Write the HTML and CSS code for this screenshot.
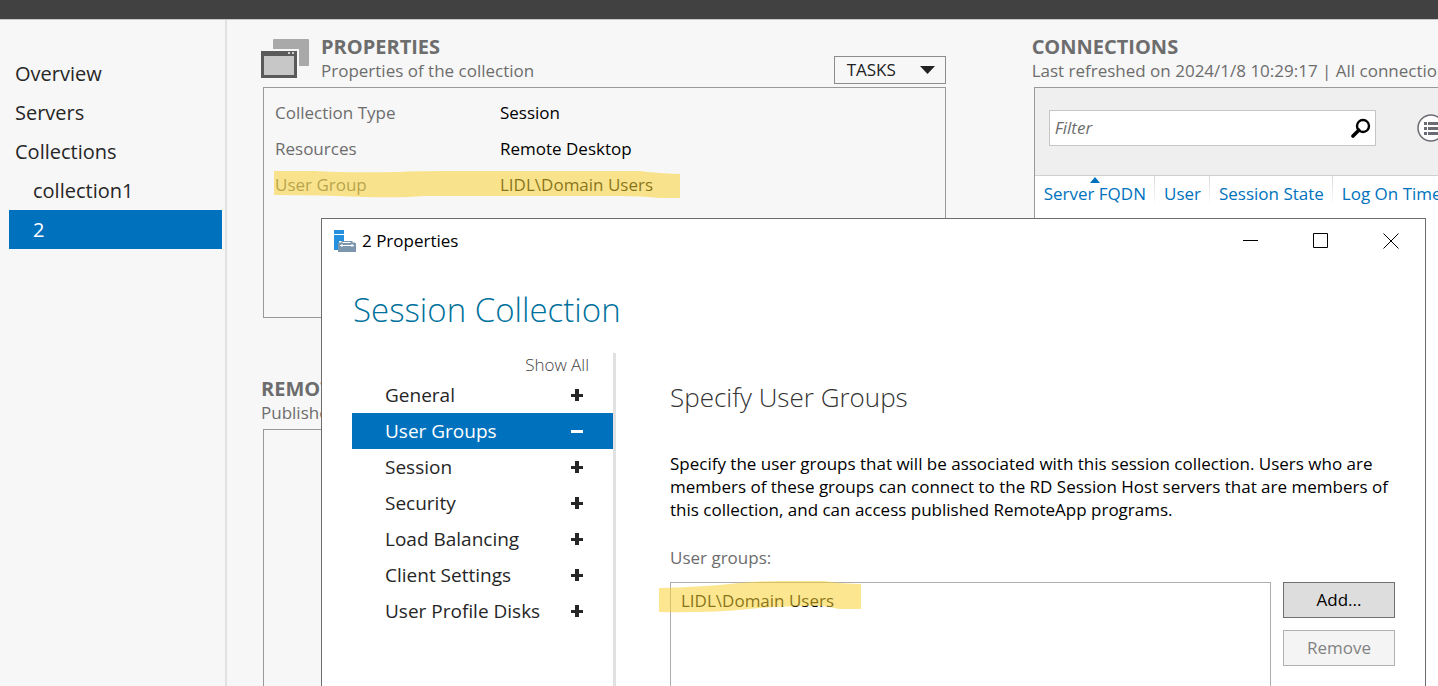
FILE: index.html
```
<!DOCTYPE html>
<html lang="en">
<head>
  <meta charset="UTF-8">
  <title>Session Collection</title>
  <link rel="stylesheet" href="styles.css">
</head>
<body>

<header class="topbar"></header>

<div class="layout">
  <nav class="sidebar">
    <a href="#">Overview</a>
    <a href="#">Servers</a>
    <a href="#">Collections</a>
    <a href="#" class="sub">collection1</a>
    <a href="#" class="sub active">2</a>
  </nav>

  <main class="content">
    <div class="column">
      <section class="panel">
        <div class="panel-head">
          <svg class="panel-icon" width="49" height="41" viewBox="0 0 49 41">
            <rect x="12" y="1" width="36" height="27" rx="1" fill="#a9a9a9"/>
            <rect x="-1" y="11" width="39" height="30" fill="#f7f7f7"/>
            <rect x="0" y="13" width="36" height="27" fill="#5a5a5a"/>
            <rect x="3" y="18" width="30" height="19" fill="#c7c7c7"/>
            <rect x="27" y="14" width="2" height="2" fill="#d0d0d0"/>
            <rect x="31" y="14" width="2" height="2" fill="#d0d0d0"/>
          </svg>
          <div class="panel-title">
            <h2>PROPERTIES</h2>
            <p>Properties of the collection</p>
          </div>
          <button class="tasks">TASKS
            <svg width="15" height="8" viewBox="0 0 15 8"><path d="M0 0h15L7.500 8z" fill="#222"/></svg>
          </button>
        </div>
        <div class="panel-body">
          <table class="props">
            <tr><th>Collection Type</th><td>Session</td></tr>
            <tr><th>Resources</th><td>Remote Desktop</td></tr>
            <tr><th>User Group</th><td>LIDL\Domain Users</td></tr>
          </table>
          <svg class="marker marker-props" width="406" height="30" viewBox="0 0 406 30">
            <path d="M0 1 L40 1 Q70 3 125 2 Q145 1 170 1 L366 1 Q380 3 406 4 L406 28 L386 28 Q366 26 346 26 L150 26 Q130 28 90 27 Q50 25 0 25 Z"/>
          </svg>
        </div>
      </section>

      <section class="panel apps">
        <div class="panel-head">
          <div class="panel-title">
            <h2>REMOTEAPP PROGRAMS</h2>
            <p>Published RemoteApp programs</p>
          </div>
        </div>
        <div class="panel-body"></div>
      </section>
    </div>

    <div class="column">
      <section class="panel connections">
        <div class="panel-head">
          <div class="panel-title">
            <h2>CONNECTIONS</h2>
            <p>Last refreshed on 2024/1/8 10:29:17 | All connections</p>
          </div>
        </div>
        <div class="panel-body">
          <div class="toolbar">
            <div class="filter">
              <input type="text" placeholder="Filter" aria-label="Filter">
              <svg width="20" height="20" viewBox="0 0 20 20" fill="none" stroke="#000">
                <circle cx="12" cy="8" r="6" stroke-width="2.400"/>
                <path d="M7.800 12.200L2 18" stroke-width="3.600" stroke-linecap="round"/>
              </svg>
            </div>
            <button class="list-btn" aria-label="List options">
              <svg width="28" height="28" viewBox="0 0 28 28">
                <circle cx="14" cy="14" r="13" fill="#fff" stroke="#6b6b73" stroke-width="1.500"/>
                <path d="M7 8h3v3H7zM11 8h10v3H11zM7 13h3v3H7zM11 13h10v3H11zM7 18h3v3H7zM11 18h10v3H11z" fill="#6b6b73"/>
              </svg>
            </button>
          </div>
          <table class="grid">
            <thead>
              <tr><th class="sorted">Server FQDN</th><th>User</th><th>Session State</th><th>Log On Time</th></tr>
            </thead>
          </table>
        </div>
      </section>
    </div>
  </main>
</div>

<div class="dialog" role="dialog" aria-labelledby="dialog-title">
  <div class="titlebar">
    <svg width="22" height="22" viewBox="0 0 22 22">
      <path d="M0 0h10v4H0zM0 5h10v6H5v9H0z" fill="#2590dd"/>
      <path d="M4 14q0-1.500 1.500-1.500h2V11h11v1.500h2q1.500 0 1.500 1.500v8H4z" fill="#7c97ad"/>
      <path d="M8.500 12.500h8M6 15.500h14M8 14v3M18 14v3" stroke="#fff" fill="none"/>
    </svg>
    <span id="dialog-title">2 Properties</span>
    <div class="window-buttons">
      <button aria-label="Minimize"><svg width="16" height="16" viewBox="0 0 16 16"><path d="M0 7.500h15"/></svg></button>
      <button aria-label="Maximize"><svg width="16" height="16" viewBox="0 0 16 16"><path d="M.5 .5h14v14H.5z"/></svg></button>
      <button aria-label="Close"><svg width="16" height="16" viewBox="0 0 16 16"><path d="M.5 .5l15 15M15.500 .5l-15 15"/></svg></button>
    </div>
  </div>

  <h1>Session Collection</h1>

  <div class="dialog-body">
    <nav class="steps">
      <a href="#" class="show-all">Show All</a>
      <a href="#">General<i class="plus"></i></a>
      <a href="#" class="active">User Groups<i class="minus"></i></a>
      <a href="#">Session<i class="plus"></i></a>
      <a href="#">Security<i class="plus"></i></a>
      <a href="#">Load Balancing<i class="plus"></i></a>
      <a href="#">Client Settings<i class="plus"></i></a>
      <a href="#">User Profile Disks<i class="plus"></i></a>
    </nav>

    <div class="page">
      <h2>Specify User Groups</h2>
      <p class="intro">Specify the user groups that will be associated with this session collection. Users who are members of these groups can connect to the RD Session Host servers that are members of this collection, and can access published RemoteApp programs.</p>
      <div class="label" id="groups-label">User groups:</div>
      <div class="groups">
        <ul class="group-list" aria-labelledby="groups-label">
          <li>LIDL\Domain Users</li>
        </ul>
        <div class="group-buttons">
          <button>Add...</button>
          <button disabled>Remove</button>
        </div>
        <svg class="marker marker-groups" width="202" height="34" viewBox="0 0 202 34">
          <path d="M0 8 Q40 7 70 4 Q100 1 120 1 L165 1 Q185 4 202 4 L202 29 L180 29 Q165 25 150 26 Q120 26 90 29 Q50 33 0 32 Z"/>
        </svg>
      </div>
    </div>
  </div>
</div>

</body>
</html>
```

FILE: styles.css
```
* { box-sizing: border-box; }
body { margin: 0; height: 100vh; display: flex; flex-direction: column; position: relative; overflow: hidden; background: #f7f7f7; font-family: "Segoe UI", "Open Sans", "Noto Sans", sans-serif; font-size: 17px; line-height: 24px; color: #000; }
h1, h2, p, ul { margin: 0; padding: 0; font-weight: normal; }
a { color: inherit; text-decoration: none; }
button, input { font: inherit; color: inherit; }
button { padding: 0; cursor: pointer; }

.topbar { flex: none; height: 20px; background: #414141; border-bottom: 1px solid #c8c8c8; }
.layout { flex: 1; display: flex; min-height: 0; }

.sidebar { flex: none; width: 227px; padding: 34px 3px 0 9px; border-right: 2px solid #e1e1e1; font-size: 20px; color: #262626; }
.sidebar a { display: block; height: 39px; line-height: 40px; padding-left: 6px; }
.sidebar .sub { padding-left: 24px; }
.sidebar .active { background: #0072bd; color: #fff; }

.content { flex: 1; min-width: 0; display: grid; grid-template-columns: minmax(0, 684fr) minmax(0, 406fr); gap: 86px; padding: 15px 0 0 34px; }
.column { display: flex; flex-direction: column; min-width: 0; }
.panel-head { flex: none; display: flex; align-items: flex-end; height: 52px; color: #6d6d6d; white-space: nowrap; }
.panel-icon { flex: none; margin: 0 11px 8px 0; }
.panel-title { flex: 1; min-width: 0; }
.panel-title h2 { font-size: 20px; font-weight: bold; }
.panel-title p { padding-bottom: 4px; overflow: hidden; }
.panel-body { position: relative; height: 231px; margin-left: 2px; border: 1px solid #999; }
.tasks { display: flex; align-items: center; justify-content: space-between; width: 112px; height: 28px; margin-bottom: 3px; padding: 0 10px 0 12px; border: 1px solid #8c8c8c; background: #f7f7f7; color: #222; }
.apps { flex: 1; display: flex; flex-direction: column; padding-top: 59px; }
.apps .panel-body { flex: 1; border-bottom: 0; }

.props { border-collapse: collapse; margin: 7px 0 0 11px; }
.props th, .props td { height: 36px; padding: 0; text-align: left; font-weight: normal; }
.props th { width: 225px; color: #6d6d6d; }

.marker { position: absolute; fill: #fad232; fill-opacity: 0.540; }
.marker-props { left: 10px; top: 82px; }
.marker-groups { left: -11px; top: -2px; }

.connections { flex: 1; display: flex; flex-direction: column; }
.connections .panel-body { flex: 1; border-right: 0; border-bottom: 0; background: #fff; }
.toolbar { display: flex; align-items: center; height: 88px; padding: 0 0 8px 14px; background: #efefef; border-bottom: 1px solid #d0d0d0; overflow: hidden; }
.filter { flex: none; display: flex; align-items: center; width: 327px; height: 36px; padding: 0 4px 0 5px; border: 1px solid #c6c6c6; background: #fff; }
.filter input { flex: 1; min-width: 0; border: 0; padding: 0; background: none; font-style: italic; outline: none; }
.filter input::placeholder { color: #6d6d6d; opacity: 1; }
.list-btn { flex: none; display: flex; margin-left: 41px; border: 0; background: none; }

.grid { border-collapse: collapse; white-space: nowrap; color: #0072bd; }
.grid th { position: relative; height: 36px; padding: 0 9px; font-weight: normal; background: linear-gradient(#d8d8d8, #fff) right top / 1px 30px no-repeat; }
.grid .sorted::before { content: ""; position: absolute; left: 50%; top: 1px; margin-left: -5px; border: 5px solid transparent; border-top: 0; border-bottom: 6px solid #0072bd; }

.dialog { position: absolute; left: 321px; right: 12px; top: 218px; bottom: 0; display: flex; flex-direction: column; border: 1px solid #6d6d6d; border-bottom: 0; background: #fff; overflow: hidden; }
.titlebar { display: flex; align-items: center; gap: 6px; height: 44px; padding: 0 26px 0 12px; }
.window-buttons { display: flex; gap: 54px; margin-left: auto; }
.window-buttons button { display: flex; border: 0; background: none; }
.window-buttons svg { fill: none; stroke: #000; }
.dialog h1 { padding-left: 31px; font-size: 33px; line-height: 48px; font-weight: 300; color: #00719c; margin: 23px 0 19px; }
.dialog-body { flex: 1; display: flex; min-height: 0; }

.steps { flex: none; width: 294px; padding-left: 30px; border-right: 3px solid #e1e1e1; font-size: 19px; color: #262626; }
.steps a { display: flex; align-items: center; justify-content: space-between; height: 36px; padding: 0 30px 0 33px; }
.steps .show-all { justify-content: flex-end; height: 24px; padding-right: 24px; font-size: 17px; font-weight: 300; color: #444; }
.steps .active { background: #0072bd; color: #fff; }
.plus, .minus { width: 12px; height: 12px; background: linear-gradient(currentColor, currentColor) center / 12px 3px no-repeat; }
.plus { background: linear-gradient(currentColor, currentColor) center / 12px 3px no-repeat, linear-gradient(currentColor, currentColor) center / 4px 12px no-repeat; }

.page { flex: 1; min-width: 0; display: flex; flex-direction: column; padding: 26px 30px 0 54px; }
.page h2 { font-size: 26px; line-height: 36px; font-weight: 300; color: #333; }
.intro { margin: 37px 0 25px; line-height: 23px; }
.label { color: #6d6d6d; margin-bottom: 12px; }
.groups { flex: 1; position: relative; display: flex; gap: 12px; }
.group-list { flex: 1; list-style: none; padding: 6px 10px; border: 1px solid #abadb3; border-bottom: 0; }
.group-buttons { display: flex; flex-direction: column; gap: 12px; }
.group-buttons button { width: 112px; height: 36px; border: 1px solid #707070; background: #ddd; }
.group-buttons button:disabled { border-color: #adb2b5; background: #f4f4f4; color: #838383; }
```
